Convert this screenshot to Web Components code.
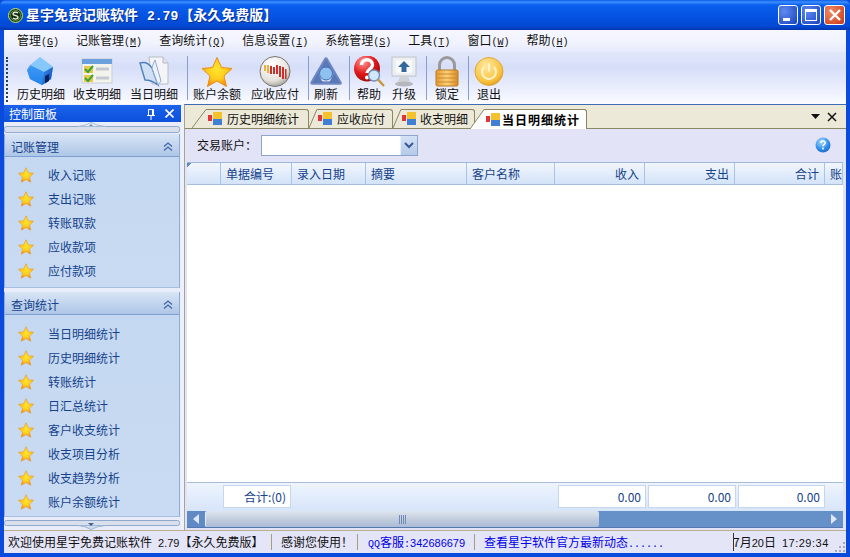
<!DOCTYPE html>
<html lang="zh">
<head>
<meta charset="utf-8">
<title>星宇免费记账软件</title>
<style>
  html,body{margin:0;padding:0;background:#0a4adc;overflow:hidden}
  body{font:12px/14px "Noto Sans CJK SC","Liberation Sans",sans-serif;color:#111}
  .m{font-family:"Liberation Mono",monospace;font-size:10px}
  .d{font-family:"Liberation Sans",sans-serif;font-size:11px}
  .tm{font-family:"Liberation Mono",monospace;font-size:13px;font-weight:bold;margin:0 1px 0 9px}
</style>
</head>
<body>

<x-window>
  <x-titlebar slot="title">星宇免费记账软件<span class="tm">2.79</span>【永久免费版】</x-titlebar>

  <x-menubar>
    <x-menu>管理<span class="m">(<u>G</u>)</span></x-menu>
    <x-menu>记账管理<span class="m">(<u>M</u>)</span></x-menu>
    <x-menu>查询统计<span class="m">(<u>Q</u>)</span></x-menu>
    <x-menu>信息设置<span class="m">(<u>I</u>)</span></x-menu>
    <x-menu>系统管理<span class="m">(<u>S</u>)</span></x-menu>
    <x-menu>工具<span class="m">(<u>T</u>)</span></x-menu>
    <x-menu>窗口<span class="m">(<u>W</u>)</span></x-menu>
    <x-menu>帮助<span class="m">(<u>H</u>)</span></x-menu>
  </x-menubar>

  <x-toolbar>
    <x-tool>
      <svg slot="icon" width="32" height="32" viewBox="0 0 32 32">
        <defs><linearGradient id="h1" x1="0" y1="0" x2="0" y2="1"><stop offset="0" stop-color="#a6dcff"/><stop offset="1" stop-color="#1470e4"/></linearGradient>
        <linearGradient id="h2" x1="0" y1="0" x2="1" y2="1"><stop offset="0" stop-color="#3a94f2"/><stop offset="1" stop-color="#0a3fa8"/></linearGradient></defs>
        <path d="M15 1 L28 11 L26 23 L17 29 L5 23 L2 14 Z" fill="url(#h1)"/>
        <path d="M15 1 L28 11 L19 16 L5 9 Z" fill="#86c8fc"/>
        <path d="M19 16 L28 11 L26 23 L17 29 Z" fill="url(#h2)"/>
        <path d="M20 20 L24 18 L24 25 L20 27.500 Z" fill="#05205f"/>
        <path d="M2 14 L5 9 L19 16 L17 29 L5 23 Z" fill="#2a8cf0" opacity=".75"/>
      </svg>
      历史明细
    </x-tool>
    <x-tool>
      <svg slot="icon" width="32" height="32" viewBox="0 0 32 32">
        <rect x="1" y="3" width="30" height="24" fill="#f3f3ee" stroke="#c9cdd5"/>
        <rect x="1" y="3" width="30" height="5" fill="#6aa0dc"/>
        <rect x="3" y="10" width="9" height="7" fill="#e8c84a"/><rect x="3" y="19" width="9" height="7" fill="#e8c84a"/>
        <path d="M4 13l3 3 5-6M4 22l3 3 5-6" fill="none" stroke="#3aa33a" stroke-width="2"/>
        <path d="M15 13h13M15 22h13" stroke="#c4c8d0" stroke-width="3"/>
      </svg>
      收支明细
    </x-tool>
    <x-tool style="margin-left:1px">
      <svg slot="icon" width="32" height="32" viewBox="0 0 32 32">
        <path d="M11 1 H25 L30 7 V28 H14 Z" fill="#f5f5f8" stroke="#b9bcc8"/>
        <path d="M25 1 V7 H30" fill="#dfe2ea" stroke="#b9bcc8"/>
        <path d="M2 7 C8 5 12 9 14 12 L20 29 C15 25 10 24 7 24 Z" fill="#cfe0f4" stroke="#4f7fc0" stroke-width="1.400"/>
        <path d="M14 12 C15 8 16 6 17 4 L23 25 L20 29 Z" fill="#eef2fa" stroke="#8fa8d0"/>
      </svg>
      当日明细
    </x-tool>
    <x-tool-sep style="margin:0 1px 0 5px"></x-tool-sep>
    <x-tool>
      <x-star slot="icon" size="32"></x-star>
      账户余额
    </x-tool>
    <x-tool style="margin-left:2px">
      <svg slot="icon" width="32" height="32" viewBox="0 0 32 32">
        <defs><radialGradient id="b1" cx=".4" cy=".25" r=".85"><stop offset="0" stop-color="#fff"/><stop offset=".65" stop-color="#e6e3dc"/><stop offset="1" stop-color="#8c8a86"/></radialGradient></defs>
        <circle cx="16" cy="15.500" r="15" fill="url(#b1)" stroke="#77726c"/>
        <path d="M5 9h2v6H5zM8 9h2v8H8z" fill="#e8b23c"/>
        <path d="M11 10h2v8h-2zM14 11h2v7h-2zM17 9h2v9h-2zM20 10h2v11h-2zM23 11h2v12h-2zM26 13h1.500v10H26z" fill="#cf2f2a"/>
      </svg>
      应收应付
    </x-tool>
    <x-tool-sep style="margin:0 1px 0 5px"></x-tool-sep>
    <x-tool small>
      <svg slot="icon" width="32" height="32" viewBox="0 0 32 32">
        <path d="M16 3 L30 27 H2 Z" fill="none" stroke="#6f88c4" stroke-width="3.500" stroke-linejoin="round"/>
        <path d="M16 3 L21 12 H11 Z" fill="#5a78b8"/><path d="M2 27 L8 17 L13 27 Z" fill="#5a78b8"/><path d="M30 27 L24 17 L19 27 Z" fill="#5a78b8"/>
        <circle cx="16" cy="17.500" r="6.500" fill="#8fc1ee" stroke="#3e6db4"/>
      </svg>
      刷新
    </x-tool>
    <x-tool-sep style="margin:0 3px 0 7px"></x-tool-sep>
    <x-tool small>
      <svg slot="icon" width="32" height="32" viewBox="0 0 32 32">
        <defs><radialGradient id="q1" cx=".35" cy=".25" r=".9"><stop offset="0" stop-color="#ff9a9a"/><stop offset=".5" stop-color="#e01818"/><stop offset="1" stop-color="#8a0808"/></radialGradient></defs>
        <circle cx="14" cy="12.500" r="13" fill="url(#q1)"/>
        <path d="M8.500 9c0-7 11-7 11 0 0 4-5.500 4-5.500 8" fill="none" stroke="#fff" stroke-width="3.400"/>
        <circle cx="14" cy="21.500" r="2" fill="#fff"/>
        <circle cx="21" cy="19.500" r="5.500" fill="#cfe6fb" stroke="#6f8fb8" stroke-width="1.400"/>
        <path d="M25 23.500 L31 30" stroke="#c9963a" stroke-width="2.400"/>
      </svg>
      帮助
    </x-tool>
    <x-tool small style="margin-left:3px">
      <svg slot="icon" width="32" height="32" viewBox="0 0 32 32">
        <rect x="4" y="1" width="24" height="19" fill="#eceff2" stroke="#bfc3c8"/>
        <rect x="8" y="4" width="16" height="13" fill="#f8f9fa"/>
        <path d="M16 5 L22 11 H18.500 V16 H13.500 V11 H10 Z" fill="#33689a"/>
        <path d="M12 20 L9 28 H23 L20 20 Z" fill="#cfd2d6"/>
        <ellipse cx="16" cy="28" rx="9" ry="2.400" fill="#b4b7bc"/>
      </svg>
      升级
    </x-tool>
    <x-tool-sep style="margin:0 4px 0 6px"></x-tool-sep>
    <x-tool small>
      <svg slot="icon" width="32" height="32" viewBox="0 0 32 32">
        <defs><linearGradient id="l1" x1="0" y1="0" x2="1" y2="0"><stop offset="0" stop-color="#e59a32"/><stop offset=".5" stop-color="#ffd27a"/><stop offset="1" stop-color="#d98a22"/></linearGradient></defs>
        <path d="M8.500 15 V9 a7.500 7.500 0 0 1 15 0 V15" fill="none" stroke="#9a9a9a" stroke-width="3"/>
        <rect x="5" y="14" width="22" height="16" rx="1.500" fill="url(#l1)" stroke="#b87a20"/>
        <path d="M5 18h22M5 22h22M5 26h22" stroke="#c98a2c"/>
      </svg>
      锁定
    </x-tool>
    <x-tool-sep style="margin:0 4px 0 5px"></x-tool-sep>
    <x-tool small>
      <svg slot="icon" width="32" height="32" viewBox="0 0 32 32">
        <defs><radialGradient id="p1" cx=".4" cy=".3" r=".8"><stop offset="0" stop-color="#ffe9a0"/><stop offset=".7" stop-color="#f8c23e"/><stop offset="1" stop-color="#d98f18"/></radialGradient></defs>
        <circle cx="16" cy="15.500" r="14" fill="url(#p1)" stroke="#e0a83a"/>
        <path d="M11 11 a7 7 0 1 0 10 0" fill="none" stroke="#fff3c8" stroke-width="2"/>
        <path d="M16 7.500 V15.500" stroke="#fff3c8" stroke-width="2"/>
      </svg>
      退出
    </x-tool>
  </x-toolbar>

  <x-workspace>
    <x-panel slot="side">
      <x-group title-text="记账管理" style="--top:5px;--bottom:5px">
        <x-nav>收入记账</x-nav>
        <x-nav>支出记账</x-nav>
        <x-nav>转账取款</x-nav>
        <x-nav>应收款项</x-nav>
        <x-nav>应付款项</x-nav>
      </x-group>
      <x-group title-text="查询统计" style="--top:6px;--bottom:3px;margin-top:4px">
        <x-nav>当日明细统计</x-nav>
        <x-nav>历史明细统计</x-nav>
        <x-nav>转账统计</x-nav>
        <x-nav>日汇总统计</x-nav>
        <x-nav>客户收支统计</x-nav>
        <x-nav>收支项目分析</x-nav>
        <x-nav>收支趋势分析</x-nav>
        <x-nav>账户余额统计</x-nav>
      </x-group>
    </x-panel>

    <x-tabs>
      <x-tab style="--slant:16px;--pad:9px">历史明细统计</x-tab>
      <x-tab style="--slant:9px;--pad:7px">应收应付</x-tab>
      <x-tab style="--slant:9px;--pad:6px;--gap:4px">收支明细</x-tab>
      <x-tab active style="--slant:16px;--pad:6px;--gap:2px;margin-left:-5px">当日明细统计</x-tab>
    </x-tabs>
    <x-filter>交易账户：</x-filter>
    <x-grid>
      <x-col slot="head" w="34"></x-col>
      <x-col slot="head" w="71">单据编号</x-col>
      <x-col slot="head" w="74">录入日期</x-col>
      <x-col slot="head" w="101">摘要</x-col>
      <x-col slot="head" w="88">客户名称</x-col>
      <x-col slot="head" w="90" right>收入</x-col>
      <x-col slot="head" w="90" right>支出</x-col>
      <x-col slot="head" w="90" right>合计</x-col>
      <x-col slot="head" w="18">账</x-col>
      <x-sum slot="foot" w="68">合计:(0)</x-sum>
      <x-sum slot="foot" w="88" style="margin-left:auto">0.00</x-sum>
      <x-sum slot="foot" w="88">0.00</x-sum>
      <x-sum slot="foot" w="87">0.00</x-sum>
    </x-grid>
    <x-scrollbar></x-scrollbar>
  </x-workspace>

  <x-statusbar>
    <x-status w="268" style="--pl:4px">欢迎使用星宇免费记账软件<span class="d" style="margin-left:6px">2.79</span>【永久免费版】</x-status>
    <x-status w="86" style="--pl:9px">感谢您使用！</x-status>
    <x-status w="117" link style="--pl:10px"><span class="m">QQ</span>客服<span class="m">:</span><span class="d">342686679</span></x-status>
    <x-status w="259" link style="--pl:9px">查看星宇软件官方最新动态<span class="m">......</span></x-status>
    <x-clock>7月<span class="d">20</span>日<span class="d" style="margin-left:6px;letter-spacing:.5px">17:29:34</span></x-clock>
  </x-statusbar>
</x-window>

<script>
function tpl(html) {
    const t = document.createElement('template');
    t.innerHTML = html;
    return t;
}

// small base class, every element just clones its template
class Base extends HTMLElement {
    constructor() {
        super();
        this.attachShadow({ mode: 'open' });
        this.shadowRoot.appendChild(this.constructor.template.content.cloneNode(true));
    }
}

class XWindow extends Base {
    static template = tpl(`
    <style>
        :host{display:flex;flex-direction:column;width:850px;height:557px;background:#0a4adc;overflow:hidden}
        .frame{flex:1;display:flex;flex-direction:column;min-height:0;margin:0 4px 4px 4px;background:#eef0fb}
    </style>
    <slot name="title"></slot>
    <div class="frame"><slot></slot></div>`);
}

class XTitlebar extends Base {
    static template = tpl(`
    <style>
        :host{display:flex;align-items:center;height:30px;flex:none;padding:0 5px 0 8px;box-sizing:border-box;
            background:linear-gradient(#0a5be6 0,#3b8fff 2px,#0a5fee 5px,#0553e2 16px,#0349d4 26px,#0336b0 30px);
            color:#fff;font-weight:bold;font-size:14px;border-radius:6px 6px 0 0}
        .txt{margin-left:3px;white-space:pre;text-shadow:1px 1px 0 #0a2f90}
        .btns{margin-left:auto;display:flex;gap:3px}
        .b{width:20px;height:20px;border:1px solid #fff;border-radius:3px;box-sizing:border-box;
            background:radial-gradient(circle at 30% 30%,#5f8bf0,#2a54cc 75%,#1a3fb0);display:flex;align-items:center;justify-content:center}
        .close{background:radial-gradient(circle at 30% 30%,#ee8a66,#d8502c 70%,#b83a1c);width:21px;margin-left:0}
    </style>
    <svg width="15" height="15" viewBox="0 0 15 15">
        <circle cx="7.500" cy="7.500" r="7" fill="#1a4a24" stroke="#cfd86a"/>
        <circle cx="7.500" cy="7.500" r="5" fill="#0d2a14" stroke="#5f9030"/>
        <path d="M10 5C8.500 3.600 5 4 5 6c0 2 5 1.200 5 3.200 0 2-3.500 2.200-5 .8" fill="none" stroke="#e6ecd0" stroke-width="1.500"/>
    </svg>
    <span class="txt"><slot></slot></span>
    <div class="btns">
        <div class="b"><svg width="18" height="18"><rect x="4" y="12" width="7" height="3" fill="#fff"/></svg></div>
        <div class="b"><svg width="18" height="18"><rect x="3.500" y="3.500" width="11" height="11" fill="none" stroke="#fff"/><rect x="3" y="3" width="12" height="3" fill="#fff"/></svg></div>
        <div class="b close"><svg width="18" height="18"><path d="M4 4 L14 14 M14 4 L4 14" stroke="#fff" stroke-width="2.400"/></svg></div>
    </div>`);
}

class XMenubar extends Base {
    static template = tpl(`
    <style>
        :host{display:flex;align-items:center;height:22px;flex:none;padding-left:4.500px;
            background:linear-gradient(#f6f7ff,#f0f2fd 60%,#e6eafb)}
    </style>
    <slot></slot>`);
}

class XMenu extends Base {
    static template = tpl(`
    <style>
        :host{display:block;padding:0 8.500px;white-space:nowrap;color:#111;line-height:22px}
    </style>
    <slot></slot>`);
}

class XToolbar extends Base {
    static template = tpl(`
    <style>
        :host{display:flex;align-items:flex-start;height:52px;flex:none;box-sizing:border-box;padding-top:4px;
            background:linear-gradient(#e2e8fb,#d6def8 30%,#f2f4fe 85%,#fcfcff)}
        .grip{width:0;height:45px;border-left:2px dotted #24406f;margin:1px 5px 0 2px}
    </style>
    <div class="grip"></div>
    <slot></slot>`);
}

class XTool extends Base {
    static template = tpl(`
    <style>
        :host{display:flex;flex-direction:column;align-items:center;width:56px;height:46px;color:#111;white-space:nowrap}
        :host([small]){width:32px}
        .ic{height:31px;display:flex;justify-content:center}
        .lb{line-height:14px}
    </style>
    <div class="ic"><slot name="icon"></slot></div>
    <div class="lb"><slot></slot></div>`);
}

class XToolSep extends Base {
    static template = tpl(`
    <style>
        :host{display:block;width:1px;height:44px;margin-top:2px;background:#8a9fc8;flex:none}
    </style>`);
}

class XStar extends Base {
    static template = tpl(`
    <style>
        :host{display:block;line-height:0}
    </style>
    <svg viewBox="0 0 32 32">
        <defs><radialGradient id="s" cx=".5" cy=".42" r=".6">
            <stop offset="0" stop-color="#ffe52e"/><stop offset=".55" stop-color="#ffcc1c"/><stop offset="1" stop-color="#f2860e"/>
        </radialGradient></defs>
        <path d="M16 1.500 L20.500 11.500 L31 12.500 L23 20 L25.500 30.500 L16 25 L6.500 30.500 L9 20 L1 12.500 L11.500 11.500 Z" fill="url(#s)" stroke="#ee8c14" stroke-linejoin="round"/>
    </svg>`);
    connectedCallback() {
        const s = this.getAttribute('size') || 16;
        const svg = this.shadowRoot.querySelector('svg');
        svg.setAttribute('width', s);
        svg.setAttribute('height', s);
    }
}

class XWorkspace extends Base {
    static template = tpl(`
    <style>
        :host{display:flex;flex:1;min-height:0}
        .main{flex:1;min-width:0;margin-left:3px;display:flex;flex-direction:column;
            border-left:1px solid #a3a39a;border-top:1px solid #3e6cb4;background:#e3e3f7;padding-bottom:2px}
    </style>
    <slot name="side"></slot>
    <div class="main"><slot></slot></div>`);
}

class XPanel extends Base {
    static template = tpl(`
    <style>
        :host{display:flex;flex-direction:column;width:177px;flex:none;margin-top:1px;background:#e9edf9}
        .head{height:18px;display:flex;align-items:center;padding-left:5px;color:#fff;
            background:linear-gradient(#1c62ea,#0c50dc)}
        .head svg{display:block}
        .head span{flex:1}
        .tools{display:flex;gap:10px;padding-right:7px;align-items:center}
        .sp{display:block;flex:none}
    </style>
    <div class="head"><span>控制面板</span>
        <div class="tools">
            <svg width="8" height="12"><path d="M1.500 1.500h5v6h-5zM0 7.500h8M4 8v4M5.500 2v5" fill="none" stroke="#fff"/></svg>
            <svg width="9" height="9"><path d="M.5 .5 L8.500 8.500 M8.500 .5 L.5 8.500" stroke="#fff" stroke-width="1.600"/></svg>
        </div>
    </div>
    <svg class="sp" width="177" height="12">
        <rect x=".5" y="4.500" width="175" height="6" rx="2" fill="#d9e0ec" stroke="#8fa9cf"/>
        <path d="M74 4.500 Q81 4 87 .5 Q93 4 102 4.500 Z" fill="#e8edf6" stroke="#a9bcd8"/>
        <path d="M85 4 h4 l-2 -2 z" fill="#6f88b0"/>
    </svg>
    <slot></slot>
    <svg class="sp" width="177" height="13">
        <rect x=".5" y="3.500" width="175" height="5" rx="2" fill="#d9e0ec" stroke="#8fa9cf"/>
        <path d="M74 8.500 Q81 9 87 12.500 Q93 9 102 8.500 Z" fill="#cfdcf0" stroke="#9fb5d6"/>
        <path d="M84 6 h6 l-3 3 z" fill="#46618f"/>
    </svg>`);
}

class XGroup extends Base {
    static template = tpl(`
    <style>
        :host{display:block;margin-right:1px;border-left:1px solid #8fabd6;border-right:1px solid #8fabd6;border-bottom:1px solid #a5bde0}
        .hd{height:23px;box-sizing:border-box;display:flex;align-items:center;justify-content:space-between;padding:3px 6px 0 6px;
            background:linear-gradient(#d8e5f6,#aec6e6);border-bottom:1px solid #7f9fd0;color:#15428b}
        .bd{padding:var(--top,5px) 0 var(--bottom,5px) 0;background:linear-gradient(#c4d8f1,#c9dbf2)}
    </style>
    <div class="hd"><span id="t"></span>
        <svg width="10" height="10"><path d="M1 4.500 L5 1 L9 4.500 M1 8.500 L5 5 L9 8.500" fill="none" stroke="#3f66a8" stroke-width="1.300"/></svg>
    </div>
    <div class="bd"><slot></slot></div>`);
    connectedCallback() {
        this.shadowRoot.querySelector('#t').textContent = this.getAttribute('title-text');
    }
}

class XNav extends Base {
    static template = tpl(`
    <style>
        :host{display:flex;align-items:center;height:24px;box-sizing:border-box;padding:2px 0 0 13px;gap:14px;color:#15428b;white-space:nowrap}
    </style>
    <x-star size="16"></x-star>
    <span><slot></slot></span>`);
}

class XTabs extends Base {
    static template = tpl(`
    <style>
        :host{display:flex;align-items:flex-end;height:24px;flex:none;box-sizing:border-box;padding-left:7px;
            background:#ece9d8;border-bottom:1px solid #8b8663}
        .act{margin-left:auto;display:flex;align-items:center;gap:7px;align-self:center;padding-right:9px}
    </style>
    <slot></slot>
    <div class="act">
        <svg width="9" height="5"><path d="M0 0 H9 L4.500 5 Z" fill="#111"/></svg>
        <svg width="10" height="10"><path d="M1 1 L9 9 M9 1 L1 9" stroke="#111" stroke-width="1.500"/></svg>
    </div>`);
}

class XTab extends Base {
    static template = tpl(`
    <style>
        :host{display:flex;height:19px;color:#111;white-space:nowrap;position:relative}
        :host([active]){height:20px;margin-bottom:-1px;font-weight:bold;color:#000;z-index:1;letter-spacing:1px}
        svg.s{width:var(--slant);height:100%;display:block;flex:none}
        svg.s path.f{fill:#ece9d8}
        :host([active]) svg.s path.f{fill:#fff}
        .body{display:flex;align-items:center;gap:var(--gap,5px);padding-right:var(--pad);height:100%;box-sizing:border-box;
            background:#ece9d8;border-top:1px solid #8b8663;border-right:1px solid #8b8663;border-top-right-radius:3px}
        :host([active]) .body{background:#fff}
    </style>
    <svg class="s" viewBox="0 0 16 20" preserveAspectRatio="none">
        <path class="f" d="M0 20 L14 0.500 H16 V20 Z"/>
        <path d="M0 20 L14 0.500 H16" fill="none" stroke="#8b8663" vector-effect="non-scaling-stroke"/>
    </svg>
    <div class="body">
        <svg width="14" height="14" viewBox="0 0 14 14">
            <rect x="0" y="3" width="4" height="6" fill="#e0343a"/>
            <rect x="5" y="0" width="9" height="7" fill="#f5c22e"/>
            <rect x="5" y="7" width="9" height="6" fill="#3f7fd6"/>
        </svg>
        <span><slot></slot></span>
    </div>`);
}

class XFilter extends Base {
    static template = tpl(`
    <style>
        :host{display:flex;align-items:center;height:33px;flex:none;padding:0 15px 1px 12px;box-sizing:border-box;background:#e3e3f7;color:#111}
        .l{width:54px;white-space:nowrap;overflow:hidden}
        .combo{margin-left:10px;width:157px;height:21px;box-sizing:border-box;border:1px solid #8ea6cc;background:#fff;display:flex;justify-content:flex-end}
        .dd{width:16px;background:linear-gradient(#d5e2f5,#b4c9ea);border-left:1px solid #e8eefa;display:flex;align-items:center;justify-content:center}
        .help{margin-left:auto}
    </style>
    <span class="l"><slot></slot></span>
    <div class="combo"><div class="dd"><svg width="10" height="7"><path d="M1 1 L5 5 L9 1" fill="none" stroke="#3a5a94" stroke-width="2"/></svg></div></div>
    <svg class="help" width="16" height="16" viewBox="0 0 16 16">
        <defs><radialGradient id="g" cx=".4" cy=".3" r=".8"><stop offset="0" stop-color="#a8dcff"/><stop offset=".6" stop-color="#2f8ee8"/><stop offset="1" stop-color="#1a62c0"/></radialGradient></defs>
        <circle cx="8" cy="8" r="7.500" fill="url(#g)"/>
        <path d="M5.800 6c0-2.800 4.600-2.600 4.400 0-.1 1.600-2.200 1.500-2.200 3.200" fill="none" stroke="#fff" stroke-width="1.600"/>
        <circle cx="8" cy="11.500" r="1" fill="#fff"/>
    </svg>`);
}

class XGrid extends Base {
    static template = tpl(`
    <style>
        :host{display:flex;flex-direction:column;flex:1;min-height:0;margin:0 3px 0 2px;background:#fff}
        .head{display:flex;height:23px;flex:none;box-sizing:border-box;border-top:1px solid #9db7dd;border-bottom:1px solid #a8c0e0;
            background:linear-gradient(135deg,#5f86c0 3px,transparent 3.500px),linear-gradient(#f2f6fe,#d3e3f8)}
        .body{flex:1;background:#fff}
        .foot{display:flex;gap:2px;height:29px;flex:none;box-sizing:border-box;padding:2px 18px 3px 36px;border-top:1px solid #a9bdd8;
            background:linear-gradient(#eef4fe,#d7e5f9)}
    </style>
    <div class="head"><slot name="head"></slot></div>
    <div class="body"></div>
    <div class="foot"><slot name="foot"></slot></div>`);
}

class XCol extends Base {
    static template = tpl(`
    <style>
        :host{display:block;flex:none;box-sizing:border-box;padding:0 5px 0 5px;line-height:21px;color:#15428b;
            border-right:1px solid #a9c3e6;white-space:nowrap;overflow:hidden}
        :host([right]){text-align:right}
        :host(:last-child){border-right:0;padding:0 0 0 4px}
    </style>
    <slot></slot>`);
    connectedCallback() { this.style.width = this.getAttribute('w') + 'px'; }
}

class XSum extends Base {
    static template = tpl(`
    <style>
        :host{display:block;flex:none;box-sizing:border-box;padding:0 4px;text-align:right;line-height:22px;color:#15428b;
            background:#fff;border:1px solid #c6d6ec}
    </style>
    <slot></slot>`);
    connectedCallback() { this.style.width = this.getAttribute('w') + 'px'; }
}

class XScrollbar extends Base {
    static template = tpl(`
    <style>
        :host{display:flex;height:17px;flex:none;margin:0 3px 0 2px;background:#6690c8;border-bottom:1px solid #5578b0;box-sizing:border-box}
        .arrow{width:18px;display:flex;align-items:center;justify-content:center;flex:none}
        .thumb{width:393px;background:linear-gradient(#dfe5ee,#c3cede 50%,#a9bbd6);display:flex;align-items:center;justify-content:center;border-radius:2px;border-left:1px solid #e8eef8}
        .gap{flex:1}
    </style>
    <div class="arrow" style="background:#5f8ac6"><svg width="6" height="10"><path d="M6 0 V10 L0 5 Z" fill="#dfe8f5"/></svg></div>
    <div class="thumb"><svg width="8" height="9"><path d="M.5 0V9M2.500 0V9M4.500 0V9M6.500 0V9" stroke="#6f8bb5"/></svg></div>
    <div class="gap"></div>
    <div class="arrow"><svg width="6" height="10"><path d="M0 0 V10 L6 5 Z" fill="#dfe8f5"/></svg></div>`);
}

class XStatusbar extends Base {
    static template = tpl(`
    <style>
        :host{display:flex;align-items:center;height:23px;flex:none;background:#e5e5f8;border-top:1px solid #b7b08c;box-sizing:border-box}
        .grip{width:13px;height:13px;align-self:flex-end;margin-left:auto}
    </style>
    <slot></slot>
    <svg class="grip" width="13" height="13"><path d="M10 2h2v2h-2zM6 6h2v2H6zM10 6h2v2h-2zM2 10h2v2H2zM6 10h2v2H6zM10 10h2v2h-2z" fill="#a9a9b8"/></svg>`);
}

class XStatus extends Base {
    static template = tpl(`
    <style>
        :host{display:block;flex:none;box-sizing:border-box;height:16px;line-height:16px;padding-left:var(--pl,4px);
            border-right:1px solid #a89f78;white-space:nowrap;overflow:hidden;color:#111}
        :host([link]){color:#0000e8}
    </style>
    <slot></slot>`);
    connectedCallback() { this.style.width = this.getAttribute('w') + 'px'; }
}

class XClock extends Base {
    static template = tpl(`
    <style>
        :host{display:block;flex:none;box-sizing:border-box;width:97px;height:18px;line-height:18px;
            border-left:1px solid #333;white-space:nowrap;overflow:hidden;color:#111;margin-left:-1px;text-indent:-1px}
    </style>
    <slot></slot>`);
}

window.customElements.define('x-window', XWindow);
window.customElements.define('x-titlebar', XTitlebar);
window.customElements.define('x-menubar', XMenubar);
window.customElements.define('x-menu', XMenu);
window.customElements.define('x-toolbar', XToolbar);
window.customElements.define('x-tool', XTool);
window.customElements.define('x-tool-sep', XToolSep);
window.customElements.define('x-star', XStar);
window.customElements.define('x-workspace', XWorkspace);
window.customElements.define('x-panel', XPanel);
window.customElements.define('x-group', XGroup);
window.customElements.define('x-nav', XNav);
window.customElements.define('x-tabs', XTabs);
window.customElements.define('x-tab', XTab);
window.customElements.define('x-filter', XFilter);
window.customElements.define('x-grid', XGrid);
window.customElements.define('x-col', XCol);
window.customElements.define('x-sum', XSum);
window.customElements.define('x-scrollbar', XScrollbar);
window.customElements.define('x-statusbar', XStatusbar);
window.customElements.define('x-status', XStatus);
window.customElements.define('x-clock', XClock);
</script>
</body>
</html>
